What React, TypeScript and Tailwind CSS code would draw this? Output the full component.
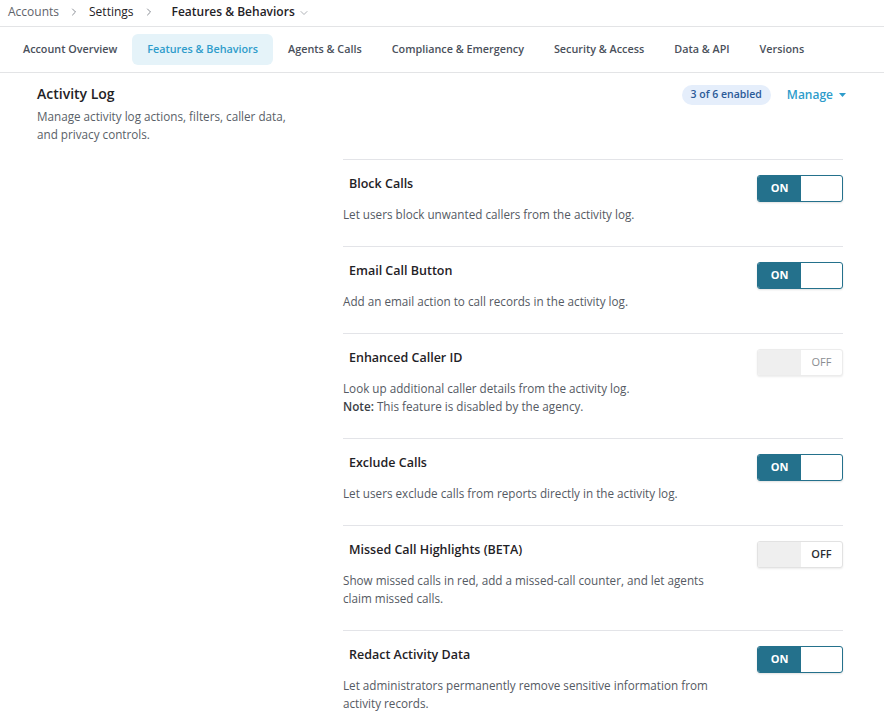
import { ChevronRight, ChevronDown } from "lucide-react";

const tabs = [
  "Account Overview",
  "Features & Behaviors",
  "Agents & Calls",
  "Compliance & Emergency",
  "Security & Access",
  "Data & API",
  "Versions",
];

type Feature = {
  title: string;
  body: string;
  note?: string;
  on: boolean;
  disabled?: boolean;
};

const features: Feature[] = [
  { title: "Block Calls", body: "Let users block unwanted callers from the activity log.", on: true },
  { title: "Email Call Button", body: "Add an email action to call records in the activity log.", on: true },
  {
    title: "Enhanced Caller ID",
    body: "Look up additional caller details from the activity log.",
    note: "This feature is disabled by the agency.",
    on: false,
    disabled: true,
  },
  { title: "Exclude Calls", body: "Let users exclude calls from reports directly in the activity log.", on: true },
  {
    title: "Missed Call Highlights (BETA)",
    body: "Show missed calls in red, add a missed-call counter, and let agents claim missed calls.",
    on: false,
  },
  {
    title: "Redact Activity Data",
    body: "Let administrators permanently remove sensitive information from activity records.",
    on: true,
  },
];

function Toggle({ on, disabled }: { on: boolean; disabled?: boolean }) {
  if (on) {
    return (
      <div className="-mt-[1px] flex h-[27px] w-[86px] overflow-hidden rounded-[3px] border border-[#24718c] bg-white shadow-[0_1px_2px_rgba(0,0,0,0.12)]">
        <div className="flex w-[43px] items-center justify-center bg-[#24718c] text-[11px] font-bold text-white">ON</div>
        <div className="flex-1" />
      </div>
    );
  }
  return (
    <div
      className={`-mt-[1px] flex h-[27px] w-[86px] overflow-hidden rounded-[3px] border bg-white shadow-[0_1px_2px_rgba(0,0,0,0.08)] ${
        disabled ? "border-[#ececec]" : "border-[#e2e2e2]"
      }`}
    >
      <div className="w-[43px] bg-[#efefef]" />
      <div
        className={`flex flex-1 items-center justify-center text-[11px] ${
          disabled ? "font-normal text-[#8a8d92]" : "font-semibold text-[#2b2e33]"
        }`}
      >
        OFF
      </div>
    </div>
  );
}

export default function App() {
  return (
    <div className="min-h-screen bg-white font-['Open_Sans',sans-serif] text-[#1f2226]">
      {/* breadcrumb */}
      <div className="flex h-[27px] items-center border-b border-[#e3e4e6] pb-[2px] pl-2 text-[12px]">
        <span className="text-[#5f646b]">Accounts</span>
        <ChevronRight className="ml-[9px] mr-[9px] h-3 w-3 text-[#6b7078]" strokeWidth={1.6} />
        <span className="text-[#1f2226]">Settings</span>
        <ChevronRight className="ml-[9px] mr-[17px] h-3 w-3 text-[#6b7078]" strokeWidth={1.6} />
        <span className="font-semibold text-[#1f2226]">Features &amp; Behaviors</span>
        <ChevronDown className="ml-[3px] mt-[1px] h-3 w-3 text-[#9a9ea5]" strokeWidth={1.6} />
      </div>

      {/* tabs */}
      <div className="flex h-[46px] items-center border-b border-[#e3e4e6] pl-2">
        {tabs.map((t) => {
          const active = t === "Features & Behaviors";
          return (
            <div
              key={t}
              className={`flex h-[31px] items-center rounded-[6px] px-[15px] text-[10.8px] font-semibold ${
                active ? "bg-[#e5f3f9] text-[#2e9ccb]" : "text-[#4a505b]"
              }`}
            >
              {t}
            </div>
          );
        })}
      </div>

      {/* section header */}
      <div className="flex pl-[37px] pr-[38px] pt-[12px]">
        <div className="flex-1">
          <h2 className="text-[14px] font-semibold leading-[18px] text-[#1f2226]">Activity Log</h2>
          <p className="mt-[4px] w-[262px] text-[11.7px] leading-[18px] text-[#5a5f68]">
            Manage activity log actions, filters, caller data, and privacy controls.
          </p>
        </div>
        <div className="flex h-[20px] items-center gap-[16px]">
          <span className="rounded-full bg-[#e5eefb] px-[9px] py-[2px] text-[10.5px] font-semibold text-[#2b5a98]">
            3 of 6 enabled
          </span>
          <span className="flex items-center gap-[6px] text-[12px] font-semibold text-[#2e9ccb]">
            Manage
            <svg width="7" height="4" viewBox="0 0 7 4">
              <path d="M0 0h7L3.5 4z" fill="#2e9ccb" />
            </svg>
          </span>
        </div>
      </div>

      {/* feature rows */}
      <div className="ml-[343px] mt-[16px] w-[500px]">
        {features.map((f) => (
          <div key={f.title} className="flex border-t border-[#e3e4e8] pb-[23px] pt-[16px]">
            <div className="flex-1">
              <div className="pl-[6px] text-[12.5px] font-semibold leading-[16px] text-[#1f2226]">{f.title}</div>
              <p className="mt-[13px] w-[375px] text-[11.7px] leading-[18px] text-[#555a63]">
                {f.body}
                {f.note && (
                  <>
                    <br />
                    <span className="font-semibold text-[#3a3e45]">Note:</span> {f.note}
                  </>
                )}
              </p>
            </div>
            <Toggle on={f.on} disabled={f.disabled} />
          </div>
        ))}
      </div>
    </div>
  );
}
